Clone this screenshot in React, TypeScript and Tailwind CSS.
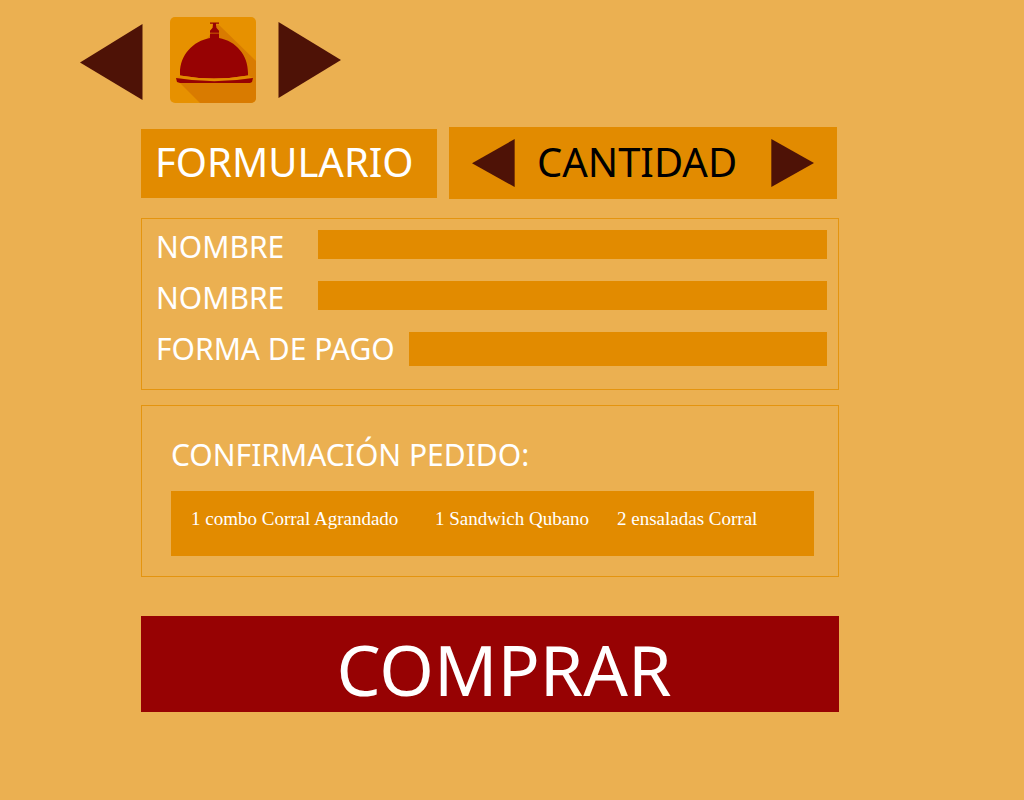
import React from "react";

type Direction = "left" | "right";

function Arrow({ direction, className }: { direction: Direction; className: string }) {
  return (
    <svg viewBox="0 0 63 76" preserveAspectRatio="none" className={className} aria-hidden="true">
      <path d={direction === "left" ? "M0 38.5 62.5 0v76Z" : "M63 38 .5 0v76Z"} fill="#4e1206" />
    </svg>
  );
}

function ServingDish() {
  return (
    <svg viewBox="0 0 86 86" className="size-[86px]" role="img" aria-label="Menú">
      <rect width="86" height="86" rx="5" fill="#e79100" />
      <path d="M48 7 86 44V81a5 5 0 0 1-5 5H30L7 63Z" fill="#d97b00" />
      <path
        d="M40 5.500h9v1.200h-3l.4 4 2.600 3v2h-9v-2l2.600-3 .4-4h-3ZM40 16.500h9v4.500c17 3 29 17 29 35v2.500Q44 64.500 10 58.500V56c0-18 13-32 30-35Z"
        fill="#970203"
      />
      <path d="M10 58.500Q44 64.500 78 58.500L83 61Q44 67 6 61Z" fill="#e28b00" />
      <path d="M6 61Q44 67.500 83 61L82 65 80 66H10L7 65Z" fill="#970203" />
    </svg>
  );
}

function Field({ id, label, tall = false }: { id: string; label: string; tall?: boolean }) {
  return (
    <div className="flex h-[51px] items-start gap-3">
      <label
        htmlFor={id}
        className={`shrink-0 whitespace-nowrap text-[30px] leading-[34px] ${tall ? "w-[241px]" : "w-[150px]"}`}
      >
        {label}
      </label>
      <input
        id={id}
        type="text"
        className={`min-w-0 flex-1 bg-[#e28b00] px-2 text-lg text-white outline-none ${tall ? "h-[34px]" : "h-[29px]"}`}
      />
    </div>
  );
}

const order = ["1 combo Corral Agrandado", "1 Sandwich Qubano", "2 ensaladas Corral"];

export default function App() {
  return (
    <div className="min-h-screen bg-[#ebb051] pb-8 pt-[17px] font-['Noto_Sans',sans-serif] text-white">
      <nav className="flex items-center pl-20">
        <button type="button" aria-label="Anterior" className="pt-[3px]">
          <Arrow direction="left" className="block h-[76px] w-[63px]" />
        </button>
        <a href="#menu" className="ml-[27px] mr-[22px]">
          <ServingDish />
        </a>
        <button type="button" aria-label="Siguiente">
          <Arrow direction="right" className="block h-[76px] w-[63px]" />
        </button>
      </nav>

      <main className="ml-[141px] mr-[185px] mt-6">
        <div className="flex items-center gap-3">
          <h1 className="h-[69px] w-[296px] shrink-0 bg-[#e28b00] pl-[14px] text-[40px] leading-[66px]">
            FORMULARIO
          </h1>
          <div className="mr-[2px] flex h-[72px] flex-1 items-center justify-between bg-[#e28b00] px-[23px]">
            <button type="button" aria-label="Menos">
              <Arrow direction="left" className="block h-12 w-[43px]" />
            </button>
            <span className="h-[69px] pr-3 text-[40px] leading-[66px] text-black">CANTIDAD</span>
            <button type="button" aria-label="Más">
              <Arrow direction="right" className="block h-12 w-[43px]" />
            </button>
          </div>
        </div>

        <form className="mt-[19px]">
          <section className="h-[172px] border border-[#e4940f] pl-[14px] pr-[11px] pt-[11px]">
            <Field id="nombre" label="NOMBRE" />
            <Field id="nombre2" label="NOMBRE" />
            <Field id="pago" label="FORMA DE PAGO" tall />
          </section>

          <section className="mt-[15px] h-[172px] border border-[#e4940f] pl-[29px] pr-6 pt-[31px]">
            <h2 className="text-[30px] leading-9">CONFIRMACIÓN PEDIDO:</h2>
            <ul className="mt-[18px] grid h-[65px] grid-cols-[244px_182px_auto] bg-[#e28b00] pl-5 pt-3 font-['Liberation_Serif',serif] text-[19px] leading-8">
              {order.map((item) => (
                <li key={item} className="whitespace-nowrap">
                  {item}
                </li>
              ))}
            </ul>
          </section>

          <button
            type="button"
            className="mt-[39px] block h-24 w-full bg-[#970203] pl-7 pt-[10px] text-[70px] leading-[86px]"
          >
            COMPRAR
          </button>
        </form>
      </main>
    </div>
  );
}
